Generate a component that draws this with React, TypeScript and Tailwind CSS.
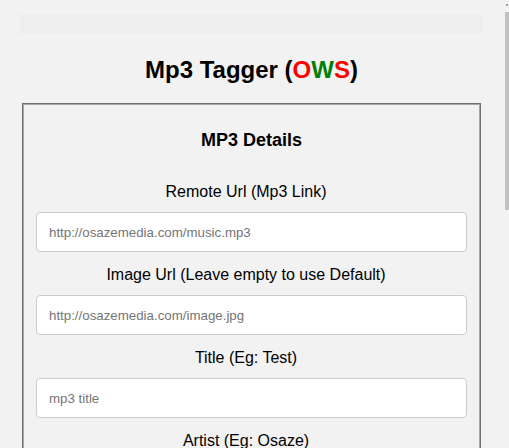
import { useState } from "react";

const fields = [
  { label: "Remote Url (Mp3 Link)", placeholder: "http://osazemedia.com/music.mp3" },
  { label: "Image Url (Leave empty to use Default)", placeholder: "http://osazemedia.com/image.jpg" },
  { label: "Title (Eg: Test)", placeholder: "mp3 title" },
  { label: "Artist (Eg: Osaze)", placeholder: "mp3 artist" },
  { label: "Album (Eg: Single)", placeholder: "mp3 album" },
];

const App = () => {
  const [values, setValues] = useState<Record<string, string>>({});

  return (
    <div className="relative h-[448px] overflow-hidden bg-[#f2f2f2] font-['Liberation_Sans',Arial,sans-serif] text-black">
      <div className="w-[503px]">
        <div className="mx-[20px] mt-[14px] h-[20px] w-[463px] bg-[#eeeeee]" />

        <h1 className="mt-[22px] text-center text-[24px] font-bold leading-[28px]">
          Mp3 Tagger (<span className="text-[#ff0000]">O</span>
          <span className="text-[#008000]">W</span>
          <span className="text-[#ff0000]">S</span>)
        </h1>

        <div className="mx-[22px] mt-[19px] w-[459px] border border-[#6f6f6f] shadow-[inset_0_0_0_1px_#a8a8a8] px-[13px] pt-[26px] pb-4">
          <h2 className="text-center text-[18px] font-bold leading-[21px]">MP3 Details</h2>

          <div className="mt-[32px] flex flex-col">
            {fields.map((f) => (
              <div key={f.label} className="flex flex-col">
                <label className="mb-[11px] pr-[11px] text-center text-[16px] leading-[18px]">{f.label}</label>
                <input
                  type="text"
                  placeholder={f.placeholder}
                  value={values[f.label] || ""}
                  onChange={(e) => setValues({ ...values, [f.label]: e.target.value })}
                  className="mb-[14px] h-[40px] w-full rounded-[4px] border border-[#cccccc] bg-white px-[12px] text-[13.3px] placeholder:text-[#757575] outline-none"
                />
              </div>
            ))}
          </div>
        </div>
      </div>

      {/* scrollbar */}
      <div className="absolute right-[1px] top-[4px] h-[2px] w-[2px] bg-[#a0a0a0]" />
      <div className="absolute right-0 top-[12px] h-[198px] w-[4px] bg-[#c1c1c1]" />
    </div>
  );
};

export default App;
